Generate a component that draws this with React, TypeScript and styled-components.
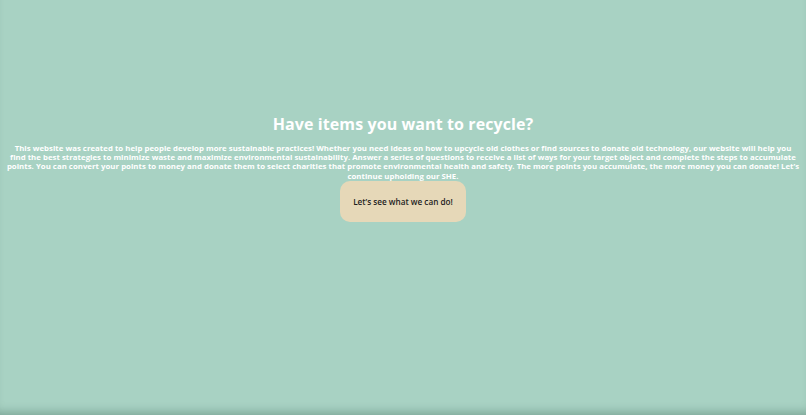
import styled, { createGlobalStyle } from "styled-components";

const GlobalStyle = createGlobalStyle`
  html, body {
    margin: 0;
    padding: 0;
    background: #a8d2c3;
  }
  body {
    font-family: "Open Sans", "DejaVu Sans", sans-serif;
  }
`;

const App = function App() {
  return (
    <>
      <GlobalStyle />
      <Style.Page>
        <Style.Title>Have items you want to recycle?</Style.Title>
        <Style.Intro>
          This website was created to help people develop more sustainable
          practices! Whether you need ideas on how to upcycle old clothes or
          find sources to donate old technology, our website will help you find
          the best strategies to minimize waste and maximize environmental
          sustainability. Answer a series of questions to receive a list of
          ways for your target object and complete the steps to accumulate
          points. You can convert your points to money and donate them to
          select charities that promote environmental health and safety. The
          more points you accumulate, the more money you can donate! Let’s
          continue upholding our SHE.
        </Style.Intro>
        <Style.StartButton>Let’s see what we can do!</Style.StartButton>
      </Style.Page>
    </>
  );
};

export default App;

const Style = {
  Page: styled.main`
    height: 415px;
    display: flex;
    flex-direction: column;
    align-items: center;
    padding: 113px 6px 0;
    box-sizing: border-box;
    background: #a8d2c3;
    box-shadow: inset 0 -9px 10px -6px rgba(70, 110, 98, 0.45);
  `,
  Title: styled.h1`
    margin: 0;
    font-size: 16px;
    font-weight: bold;
    color: #ffffff;
    line-height: 22px;
    letter-spacing: 0.1px;
  `,
  Intro: styled.p`
    margin: 9px 0 0;
    font-size: 7.8px;
    font-weight: bold;
    line-height: 9.2px;
    letter-spacing: 0.03px;
    color: #ffffff;
    text-align: center;
  `,
  StartButton: styled.button`
    width: 126px;
    height: 41px;
    border: none;
    border-radius: 10px;
    background: #e6d8b8;
    color: #1e1e1e;
    font-family: "Open Sans", "DejaVu Sans", sans-serif;
    font-size: 8.2px;
    font-weight: 600;
    cursor: pointer;
  `,
};
